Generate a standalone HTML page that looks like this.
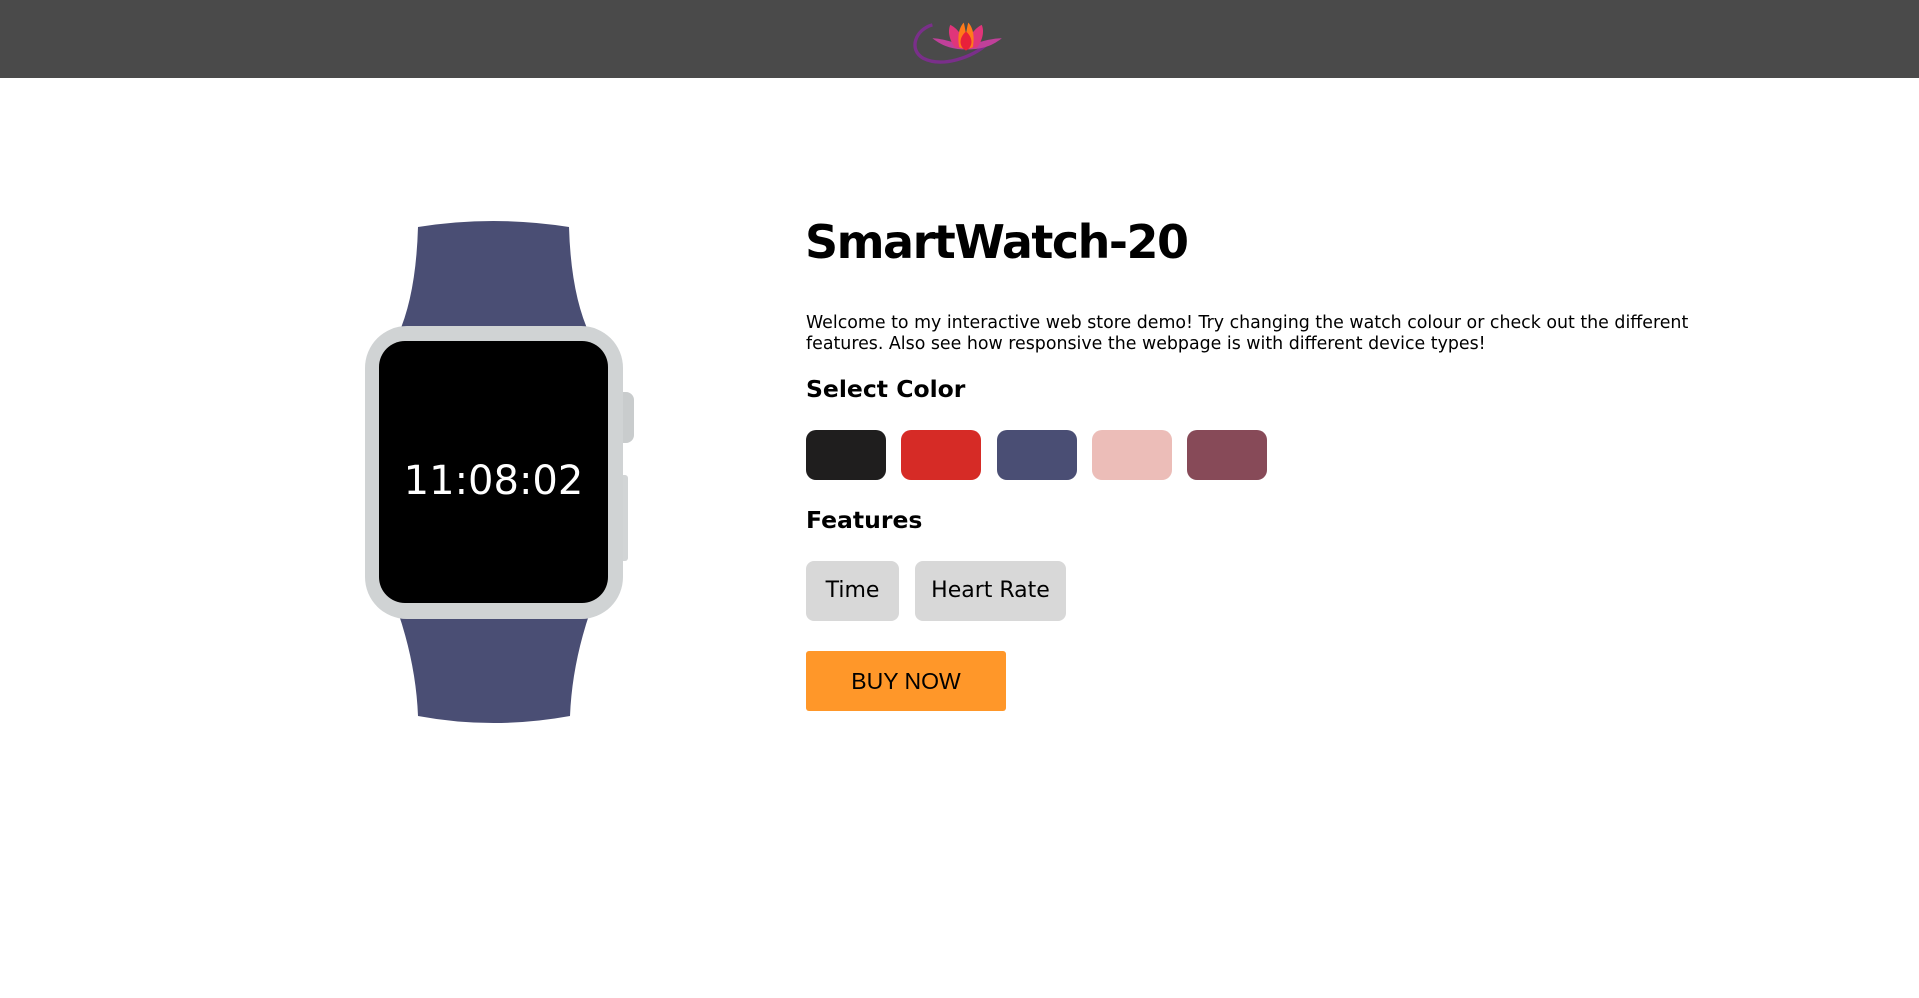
<!DOCTYPE html>
<html><head><meta charset="utf-8"><style>
*{margin:0;padding:0;box-sizing:border-box}
body{width:1919px;height:998px;background:#fff;position:relative;overflow:hidden;font-family:"DejaVu Sans","Liberation Sans",sans-serif;color:#000}
.hdr{position:absolute;left:0;top:0;width:1919px;height:78px;background:#4a4a4a}
.abs{position:absolute;white-space:nowrap}
h1{position:absolute;left:805px;top:212px;font-size:46px;font-weight:bold;letter-spacing:-1.5px;line-height:60px}
.p{position:absolute;left:806px;top:313px;font-size:17.4px;line-height:21px;width:900px}
.h2{position:absolute;left:806px;font-size:23.5px;font-weight:bold;line-height:30px}
.sw{position:absolute;top:430px;width:80px;height:50px;border-radius:10px}
.btn{position:absolute;top:561px;height:60px;background:#d8d8d8;border-radius:8px;font-size:22px;line-height:60px;text-align:center}
.buy{position:absolute;left:806px;top:651px;width:200px;height:60px;background:#ff9729;border-radius:3px;font-family:"Liberation Sans",sans-serif;font-size:23px;line-height:60px;text-align:center}
</style></head><body>
<div class="hdr">
<svg style="position:absolute;left:910px;top:9px" width="112" height="63" viewBox="0 0 100 56">
<path d="M20 14 C5 18 -2 36 12 44 C28 52 55 44 70 30" stroke="#7a2f8a" stroke-width="3" fill="none"/>
<path d="M45 32 C35 28 25 26 20 26 C30 34 40 36 50 36Z" fill="#c0409a"/>
<path d="M55 32 C65 28 75 26 82 26 C72 34 62 36 50 36Z" fill="#c0409a"/>
<path d="M40 34 C34 26 34 18 36 14 C44 18 48 26 50 36Z" fill="#e0357a"/>
<path d="M60 34 C66 26 66 18 64 14 C56 18 52 26 50 36Z" fill="#e0357a"/>
<path d="M44 34 C42 24 44 16 48 12 C50 20 51 28 50 36Z" fill="#ff7a1a"/>
<path d="M56 34 C58 24 56 16 52 12 C50 20 49 28 50 36Z" fill="#ff7a1a"/>
<path d="M50 37 C44 34 43 26 50 20 C57 26 56 34 50 37Z" fill="#e8203a"/>
</svg>
</div>
<svg style="position:absolute;left:360px;top:215px" width="280" height="515" viewBox="360 215 280 515">
<path d="M418 227 Q493 215 569 227 Q571 295 590 335 L398 335 Q416 295 418 227Z" fill="#4a4e74"/>
<path d="M398 612 L590 612 Q572 665 570 716 Q493 730 418 716 Q416 665 398 612Z" fill="#4a4e74"/>
<rect x="613" y="392" width="21" height="51" rx="8" fill="#c9cccd"/>
<rect x="620" y="475" width="8" height="86" rx="3" fill="#d2d5d6"/>
<rect x="365" y="326" width="258" height="293" rx="42" fill="#d0d3d4"/>
<rect x="379" y="341" width="229" height="262" rx="26" fill="#000"/>
</svg>
<div class="abs" style="left:379px;top:456px;width:229px;text-align:center;color:#fff;font-size:40px;line-height:50px">11:08:02</div>
<h1>SmartWatch-20</h1>
<div class="p">Welcome to my interactive web store demo! Try changing the watch colour or check out the different features. Also see how responsive the webpage is with different device types!</div>
<div class="h2" style="top:374px">Select Color</div>
<div class="sw" style="left:806px;background:#1f1e1e"></div>
<div class="sw" style="left:901px;background:#d62b26"></div>
<div class="sw" style="left:997px;background:#4a4e74"></div>
<div class="sw" style="left:1092px;background:#ecbdb8"></div>
<div class="sw" style="left:1187px;background:#874a58"></div>
<div class="h2" style="top:505px">Features</div>
<div class="btn" style="left:806px;width:93px">Time</div>
<div class="btn" style="left:915px;width:151px">Heart Rate</div>
<div class="buy">BUY NOW</div>
</body></html>
